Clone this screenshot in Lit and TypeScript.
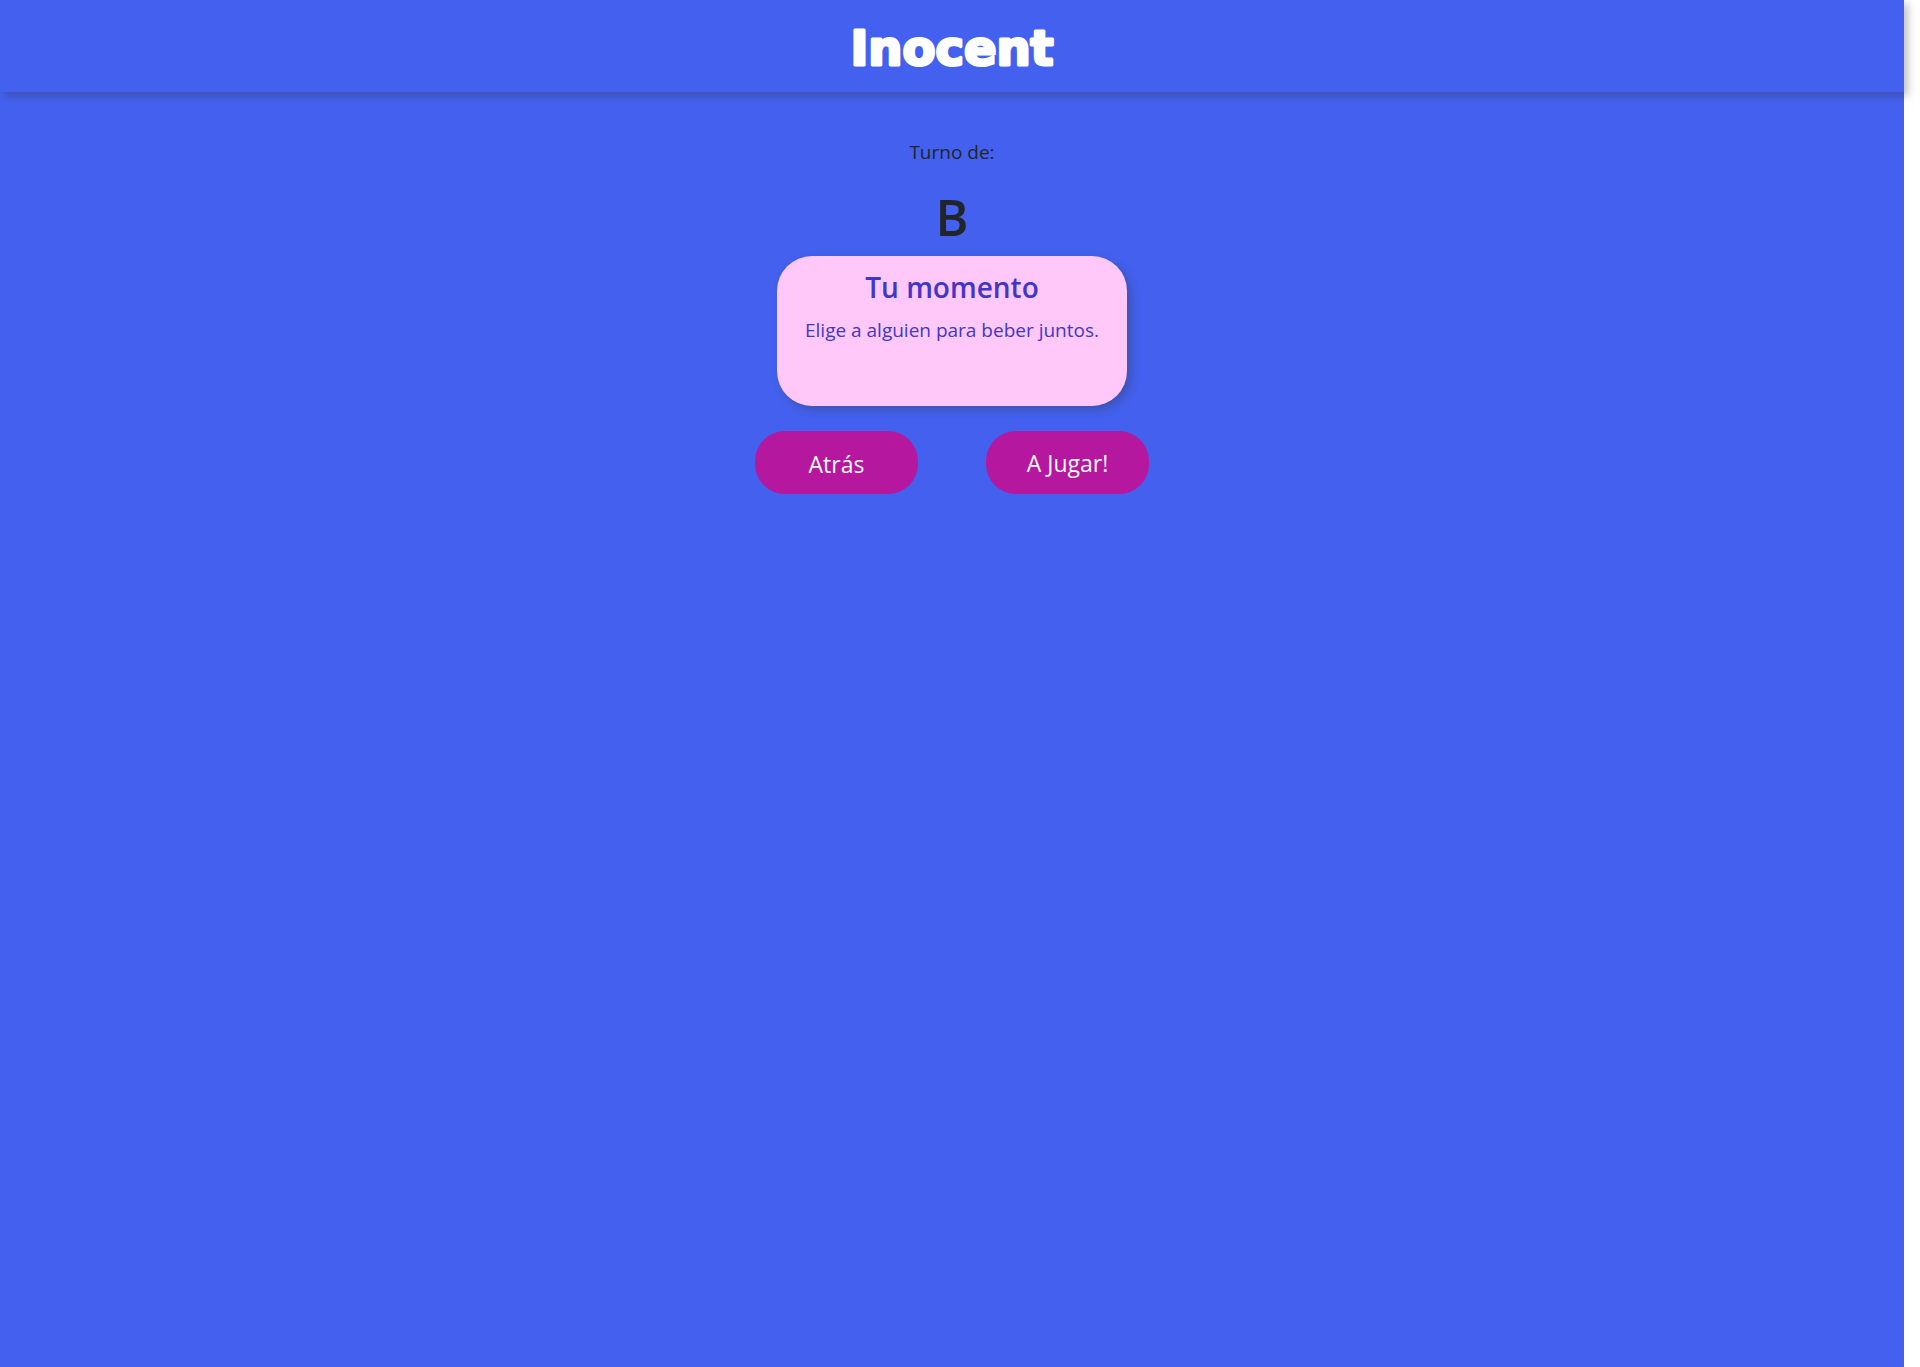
import { LitElement, html, css } from "lit";
import { customElement, state } from "lit/decorators.js";

@customElement("app-root")
export class AppRoot extends LitElement {
  static styles = css`
    :host {
      display: block;
      box-sizing: border-box;
      min-height: 100vh;
      padding-right: 16px;
      overflow: hidden;
      background: #fff;
      color: #212529;
      font-family: "Open Sans", "Noto Sans", sans-serif;
      font-size: 19px;
      line-height: 32px;
    }
    .page {
      min-height: 100vh;
      background: #4361ee;
      display: flex;
      flex-direction: column;
      align-items: center;
    }
    .bar {
      align-self: stretch;
      box-sizing: border-box;
      height: 92px;
      display: flex;
      justify-content: center;
      align-items: center;
      background: #4361ee;
      box-shadow: 4px 4px 8px rgba(51, 51, 51, 0.3);
    }
    .brand {
      display: block;
      width: 240px;
      height: 80px;
    }
    .brand text {
      font-family: "DejaVu Sans", sans-serif;
      font-weight: 700;
      font-size: 48px;
      fill: #fff;
      stroke: #fff;
      stroke-width: 3px;
      stroke-linejoin: round;
    }
    .turn {
      display: flex;
      flex-direction: column;
      align-items: center;
      padding-top: 44px;
    }
    .turn p,
    .turn h1,
    .card h2,
    .card p {
      margin: 0;
    }
    .turn h1 {
      padding: 17px 0 7px;
      font-size: 50px;
      line-height: 64px;
      font-weight: 600;
    }
    .card {
      box-sizing: border-box;
      width: 350px;
      max-width: 100%;
      min-height: 150px;
      padding: 12px 20px;
      border-radius: 35px;
      background: #ffc8f8;
      color: #3f37c9;
      text-align: center;
      box-shadow: 4px 4px 8px rgba(51, 51, 51, 0.3);
    }
    .card h2 {
      padding-bottom: 8px;
      font-size: 28px;
      line-height: 38px;
      font-weight: 600;
    }
    .actions {
      display: flex;
      flex-wrap: wrap;
      gap: 68px;
      padding-top: 25px;
    }
    .actions a,
    .actions button {
      box-sizing: border-box;
      width: 163px;
      height: 63px;
      padding: 0;
      border: 0;
      border-radius: 30px;
      background: #b5179e;
      color: #f8f9fa;
      font: inherit;
      font-size: 23px;
      line-height: 36px;
      text-align: center;
      text-decoration: none;
      cursor: pointer;
    }
    .actions a {
      padding-top: 15px;
    }
  `;

  @state() private player = "B";

  render() {
    return html`
      <div class="page">
        <header class="bar">
          <svg class="brand" viewBox="0 0 240 80" role="img" aria-label="Inocent">
            <text x="120" y="59" text-anchor="middle">Inocent</text>
          </svg>
        </header>
        <section class="turn">
          <p>Turno de:</p>
          <h1>${this.player}</h1>
        </section>
        <article class="card">
          <h2>Tu momento</h2>
          <p>Elige a alguien para beber juntos.</p>
        </article>
        <nav class="actions">
          <a href="#">Atrás</a>
          <button type="button">A Jugar!</button>
        </nav>
      </div>
    `;
  }
}
